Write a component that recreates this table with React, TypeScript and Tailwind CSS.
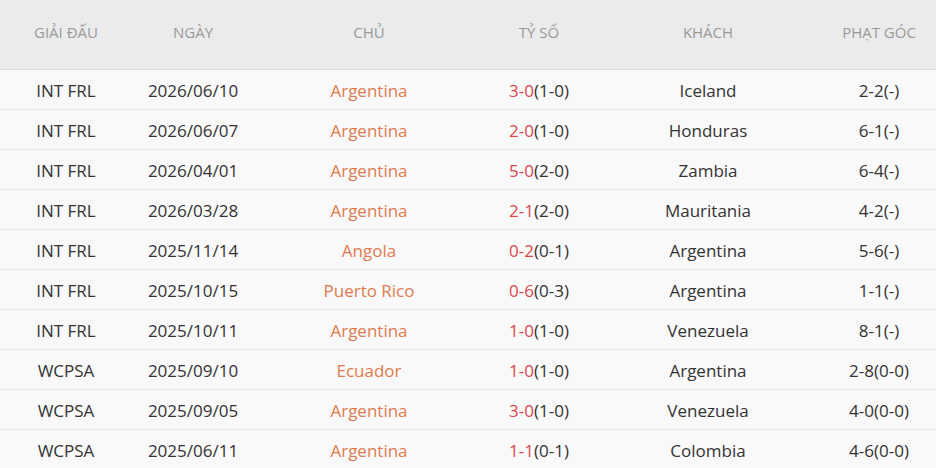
const rows = [
  ["INT FRL", "2026/06/10", "Argentina", "3-0", "(1-0)", "Iceland", "2-2(-)"],
  ["INT FRL", "2026/06/07", "Argentina", "2-0", "(1-0)", "Honduras", "6-1(-)"],
  ["INT FRL", "2026/04/01", "Argentina", "5-0", "(2-0)", "Zambia", "6-4(-)"],
  ["INT FRL", "2026/03/28", "Argentina", "2-1", "(2-0)", "Mauritania", "4-2(-)"],
  ["INT FRL", "2025/11/14", "Angola", "0-2", "(0-1)", "Argentina", "5-6(-)"],
  ["INT FRL", "2025/10/15", "Puerto Rico", "0-6", "(0-3)", "Argentina", "1-1(-)"],
  ["INT FRL", "2025/10/11", "Argentina", "1-0", "(1-0)", "Venezuela", "8-1(-)"],
  ["WCPSA", "2025/09/10", "Ecuador", "1-0", "(1-0)", "Argentina", "2-8(0-0)"],
  ["WCPSA", "2025/09/05", "Argentina", "3-0", "(1-0)", "Venezuela", "4-0(0-0)"],
  ["WCPSA", "2025/06/11", "Argentina", "1-1", "(0-1)", "Colombia", "4-6(0-0)"],
];

const cols = "grid grid-cols-[132px_122px_230px_110px_228px_114px]";

export default function App() {
  return (
    <div className="w-[936px] h-[468px] overflow-hidden bg-[#f9f9f9] font-['Open_Sans',sans-serif]">
      {/* tiêu đề bảng */}
      <div className={`${cols} h-[70px] items-center bg-[#ebebeb] border-b border-[#dcdcdc] text-[15px] text-[#999] text-center pb-[4px]`}>
        <div>GIẢI ĐẤU</div>
        <div>NGÀY</div>
        <div>CHỦ</div>
        <div>TỶ SỐ</div>
        <div>KHÁCH</div>
        <div>PHẠT GÓC</div>
      </div>
      {rows.map((r, i) => (
        <div
          key={i}
          className={`${cols} h-[40px] items-center border-b border-[#e6e6e6] text-[17px] text-[#333] text-center pt-[2px]`}
        >
          <div>{r[0]}</div>
          <div>{r[1]}</div>
          <div className="text-[#e07b4f]">{r[2]}</div>
          <div>
            <span className="text-[#d9474b]">{r[3]}</span>
            {r[4]}
          </div>
          <div>{r[5]}</div>
          <div>{r[6]}</div>
        </div>
      ))}
    </div>
  );
}
